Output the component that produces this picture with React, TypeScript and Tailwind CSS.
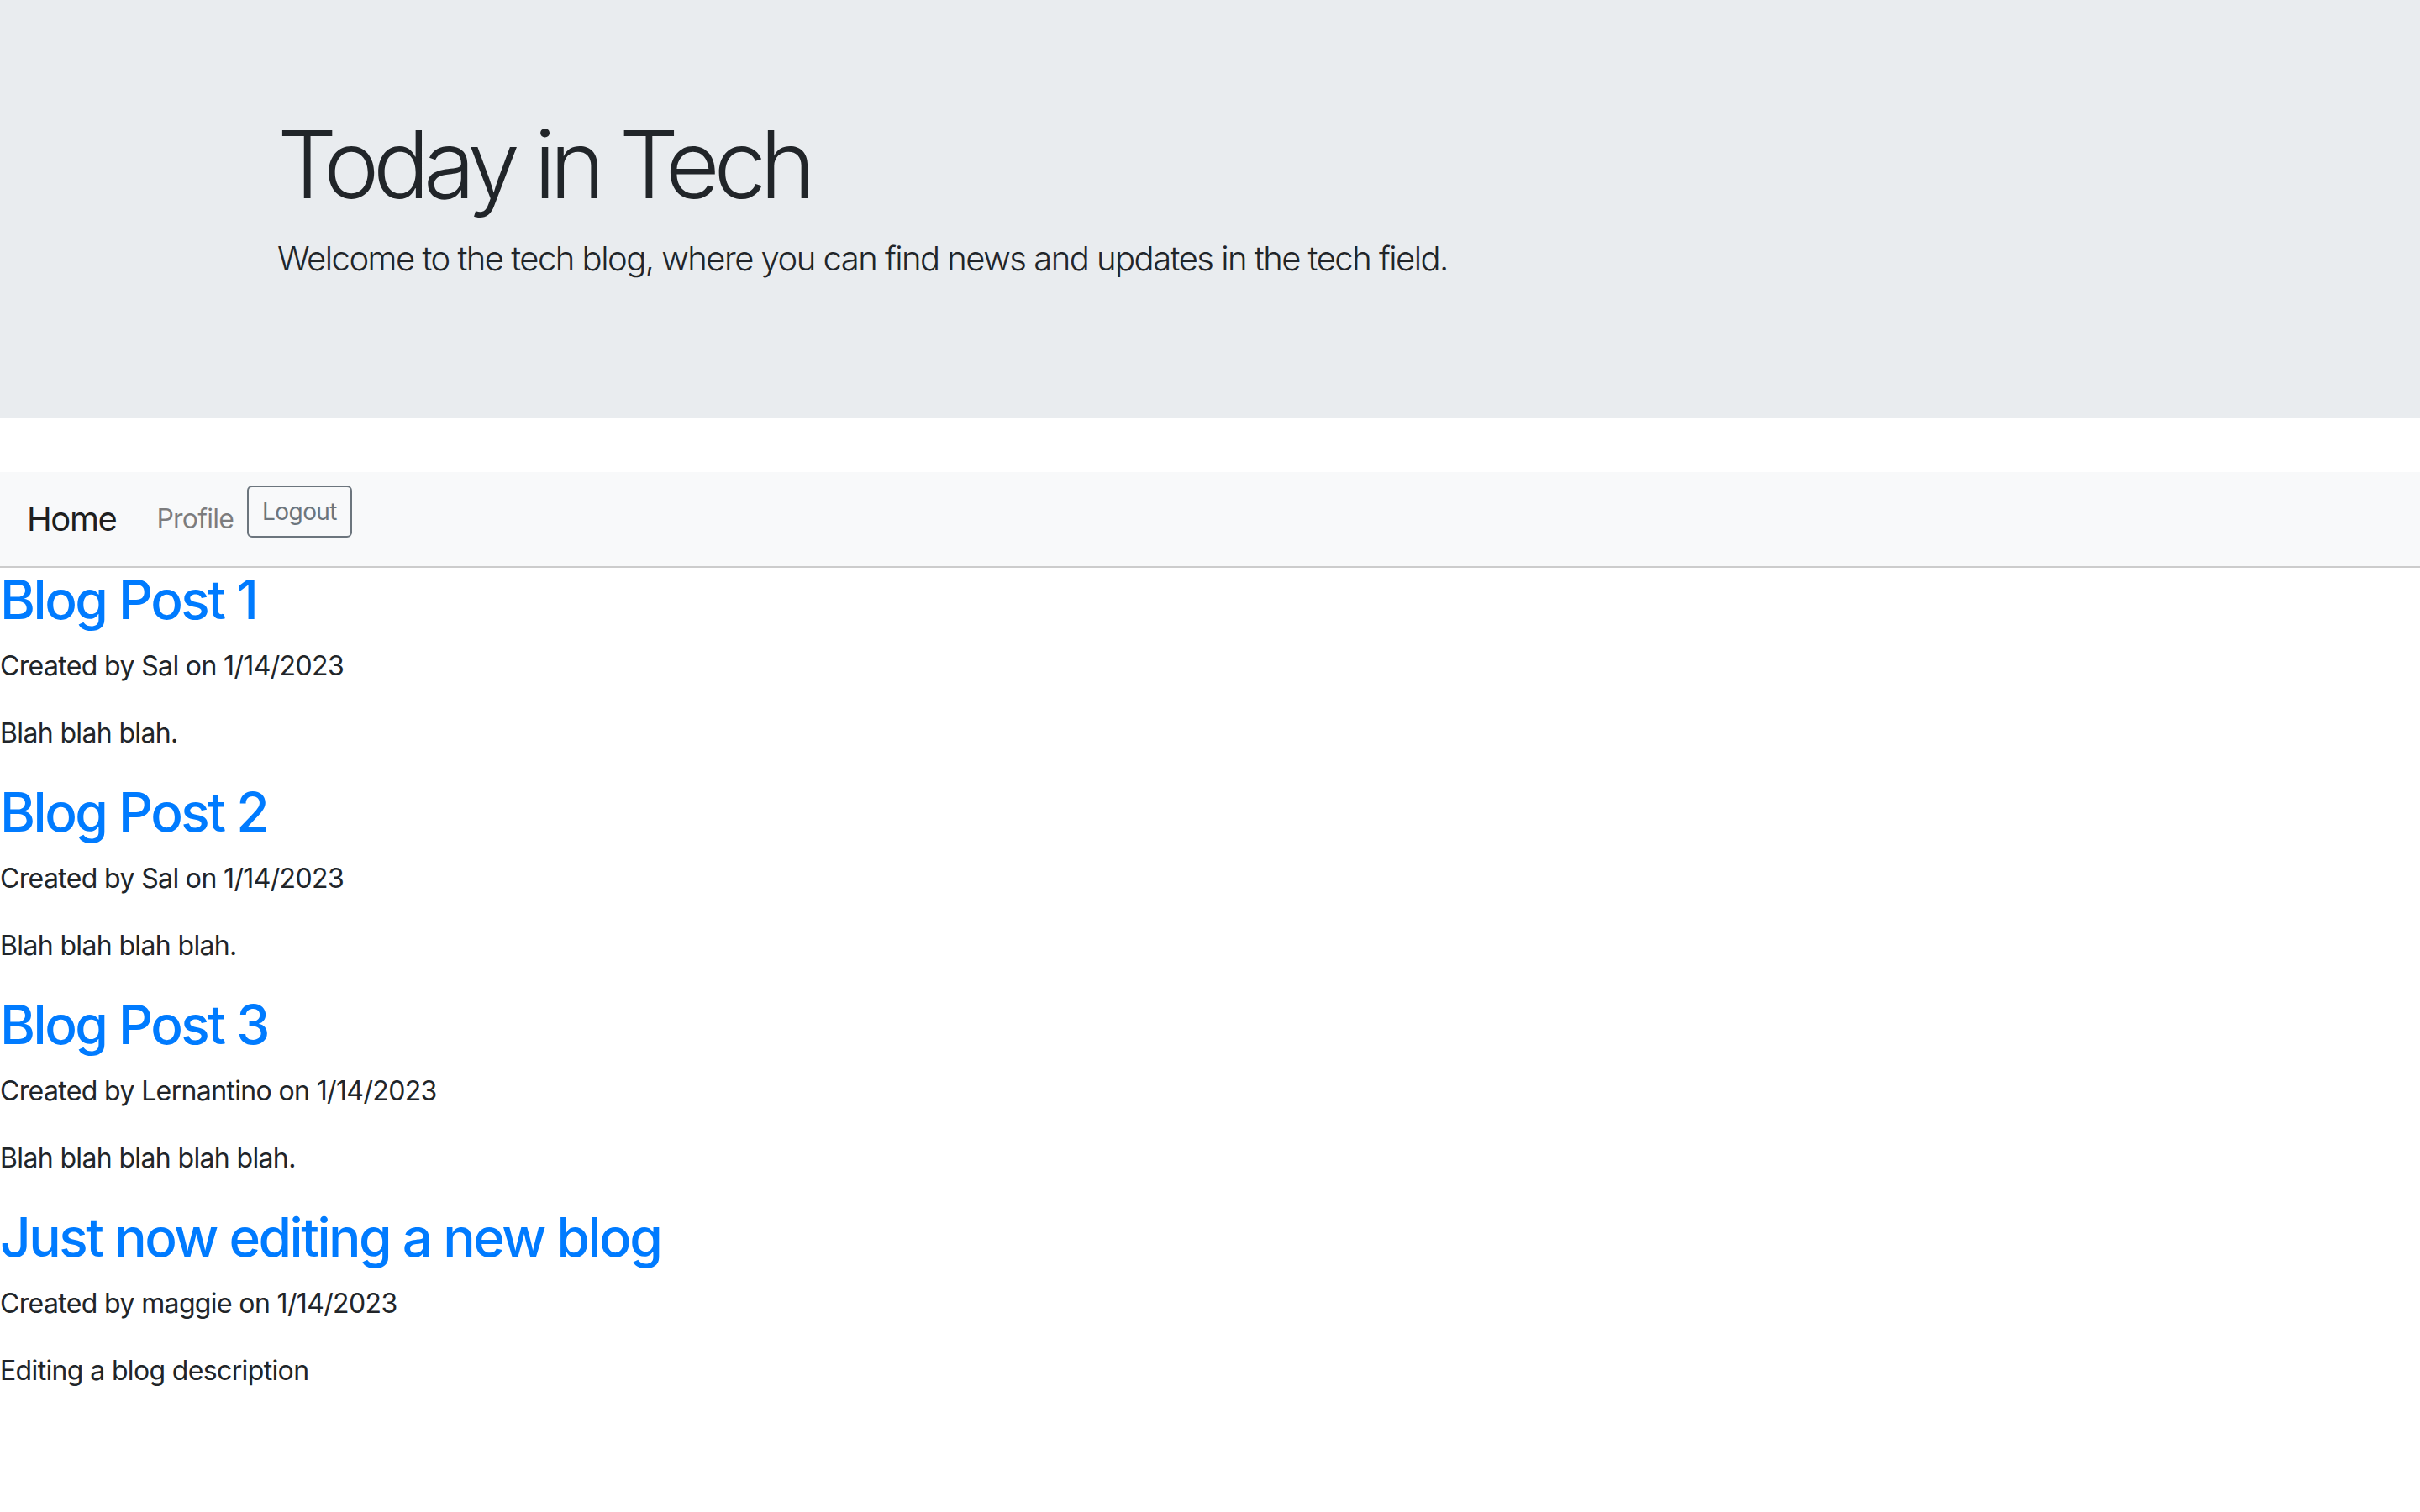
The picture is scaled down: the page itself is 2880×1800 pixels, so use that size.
const posts = [
  { title: 'Blog Post 1', author: 'Sal', date: '1/14/2023', body: 'Blah blah blah.' },
  { title: 'Blog Post 2', author: 'Sal', date: '1/14/2023', body: 'Blah blah blah blah.' },
  { title: 'Blog Post 3', author: 'Lernantino', date: '1/14/2023', body: 'Blah blah blah blah blah.' },
  { title: 'Just now editing a new blog', author: 'maggie', date: '1/14/2023', body: 'Editing a blog description' },
];

export default function App() {
  return (
    <div className="min-h-screen bg-white text-[#212529] font-['Inter','Noto_Sans',sans-serif]">
      {/* Jumbotron */}
      <div className="bg-[#e9ecef] py-[128px] mb-[64px]">
        <div className="mx-auto w-[2280px] px-[30px]">
          <h1 className="text-[112px] font-light leading-[1.2] mb-[16px] tracking-[-0.066em]">Today in Tech</h1>
          <p className="text-[40px] font-light leading-[1.5] mb-[32px] tracking-[-0.038em]">
            Welcome to the tech blog, where you can find news and updates in the tech field.
          </p>
        </div>
      </div>

      {/* Navbar */}
      <nav className="flex items-start bg-[#f8f9fa] px-[32px] py-[16px] border-b-2 border-[#cccccc]">
        <a className="py-[10px] mr-[32px] text-[40px] leading-[1.5] text-black/90 tracking-[-0.035em]">Home</a>
        <a className="p-[16px] text-[32px] leading-[1.5] text-black/50 tracking-[-0.025em]">Profile</a>
        <button className="px-[16px] py-[8px] text-[28px] leading-[1.5] text-[#6c757d] border-2 border-[#6c757d] rounded-[6px] tracking-[-0.02em]">
          Logout
        </button>
      </nav>

      {/* Posts */}
      <div>
        {posts.map((p) => (
          <div key={p.title}>
            <h2 className="text-[64px] font-medium leading-[1.2] mb-[16px] text-[#007bff] tracking-[-0.039em]">{p.title}</h2>
            <p className="text-[32px] leading-[1.5] mb-[32px] tracking-[-0.02em]">
              Created by {p.author} on {p.date}
            </p>
            <p className="text-[32px] leading-[1.5] mb-[32px] tracking-[-0.02em]">{p.body}</p>
          </div>
        ))}
      </div>
    </div>
  );
}
